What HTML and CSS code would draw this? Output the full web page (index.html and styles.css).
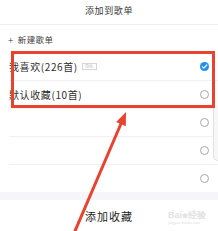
FILE: index.html
```html
<!DOCTYPE html>
<html lang="zh">
<head>
<meta charset="utf-8">
<link rel="stylesheet" href="styles.css">
</head>
<body>
<div class="sheet">
  <div class="header">添加到歌单</div>
  <div class="new"><span class="plus">+</span><span>新建歌单</span></div>
  <div class="list">
    <div class="row"><span class="name">我喜欢(226首)</span><span class="tag">隐私</span><span class="check on"><svg width="9" height="9" viewBox="0 0 9 9"><path d="M2.3 4.6 L3.9 6.1 L6.8 3" fill="none" stroke="#fff" stroke-width="1.2" stroke-linecap="round" stroke-linejoin="round"/></svg></span></div>
    <div class="row"><span class="name">默认收藏(10首)</span><span class="check"></span></div>
    <div class="row"><span class="name"></span><span class="check"></span></div>
    <div class="row"><span class="name"></span><span class="check"></span></div>
    <div class="row last"><span class="name"></span><span class="check"></span></div>
  </div>
  <div class="band"></div>
  <div class="footer">添加收藏</div>
</div>
<div class="scroll"></div>
<div class="highlight"></div>
<div class="watermark"><span class="wm1">Bai<span class="paw">❀</span>经验</span><span class="wm2">jingyan.baidu.com</span></div>
<svg class="arrow" width="218" height="231" viewBox="0 0 218 231">
  <line x1="72" y1="238" x2="121.5" y2="122.5" stroke="#e8432f" stroke-width="3"/>
  <polygon points="126,112 125.8,126.2 116.2,122.1" fill="#e8432f"/>
</svg>
</body>
</html>
```
FILE: styles.css
```css
html, body {
  margin: 0;
  padding: 0;
}
body {
  width: 218px;
  height: 231px;
  overflow: hidden;
  background: #fff;
  font-family: "Noto Sans CJK SC", "Noto Sans", sans-serif;
  color: #333;
  position: relative;
}
.sheet {
  display: flex;
  flex-direction: column;
}
.header {
  height: 24px;
  line-height: 22px;
  text-align: center;
  font-size: 9px;
  letter-spacing: 0.6px;
  color: #3a3a3a;
  border-bottom: 1px solid #efeff1;
}
.new {
  height: 28px;
  display: flex;
  align-items: center;
  padding-left: 8px;
  font-size: 8.5px;
  letter-spacing: 0.4px;
  color: #3a3a3a;
  gap: 4px;
}
.plus {
  font-size: 10px;
  font-weight: 300;
  color: #3a3a3a;
}
.list {
  display: flex;
  flex-direction: column;
}
.row {
  height: 27px;
  margin-left: 9px;
  border-bottom: 1px solid #f1f1f3;
  display: flex;
  align-items: center;
  padding-right: 9px;
  font-size: 10px;
  letter-spacing: 0.6px;
  color: #2e2e2e;
}
.row.last {
  border-bottom: none;
}
.name {
  white-space: nowrap;
}
.tag {
  margin-left: 4px;
  height: 5px;
  width: 13px;
  border: 0.5px solid #d6d6d6;
  font-size: 4px;
  line-height: 5px;
  color: #c4c4c4;
  text-align: center;
  letter-spacing: 0;
  overflow: hidden;
}
.check {
  margin-left: auto;
  width: 9px;
  height: 9px;
  box-sizing: border-box;
  border: 1px solid #a8a8ac;
  border-radius: 50%;
  display: flex;
  align-items: center;
  justify-content: center;
}
.check.on {
  border: none;
  background: #1f8ff0;
}
.check svg {
  display: block;
}
.band {
  height: 8px;
  background: #f6f6f8;
}
.footer {
  height: 31px;
  line-height: 33px;
  text-align: center;
  font-size: 11px;
  letter-spacing: 1px;
  color: #222;
}
.scroll {
  position: absolute;
  left: 213px;
  top: 106px;
  width: 8px;
  height: 54px;
  background: #f7f7f8;
  border-left: 1px solid #e2e2e4;
  border-bottom: 1px solid #e2e2e4;
  border-bottom-left-radius: 5px;
}
.highlight {
  position: absolute;
  left: 11px;
  top: 51px;
  width: 204px;
  height: 57px;
  box-sizing: border-box;
  border: 3px solid #e8432f;
}
.watermark {
  position: absolute;
  left: 168px;
  top: 211px;
  display: flex;
  flex-direction: column;
  font-family: "Liberation Sans", sans-serif;
  color: #e2e2e2;
  line-height: 1;
}
.wm1 {
  font-size: 9px;
  font-weight: bold;
}
.paw {
  font-size: 7px;
}
.wm2 {
  font-size: 4px;
  margin-top: 1px;
}
.arrow {
  position: absolute;
  left: 0;
  top: 0;
}
```
